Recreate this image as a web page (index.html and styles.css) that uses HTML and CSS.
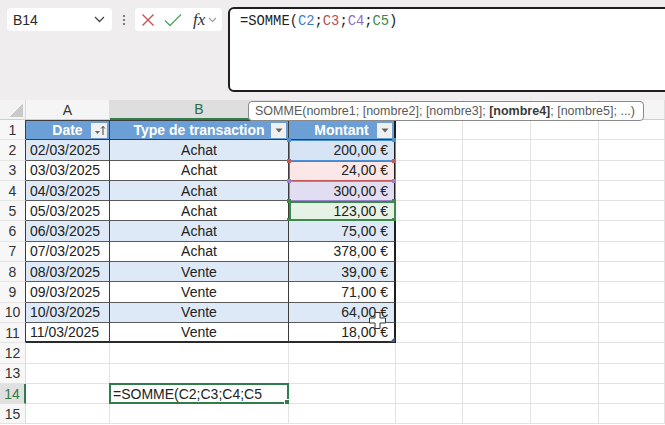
FILE: index.html
```html
<!DOCTYPE html>
<html lang="fr">
  <head>
    <meta charset="UTF-8" />
    <meta name="viewport" content="width=device-width, initial-scale=1.0" />
    <title>Classeur - SOMME</title>
    <link rel="stylesheet" href="styles.css">
  </head>
  <body>
    <div class="topbar">
      <div class="namebox">
        <span>B14</span>
        <svg width="11" height="7" viewBox="0 0 11 7"><path d="M1 1l4.5 4.5L10 1" fill="none" stroke="#444" stroke-width="1.3"/></svg>
      </div>
      <div class="dots"><i></i><i></i><i></i></div>
      <div class="fxbox">
        <svg width="14" height="14" viewBox="0 0 14 14"><path d="M1.5 1.5l11 11M12.5 1.5l-11 11" stroke="#d24c4c" stroke-width="1.4"/></svg>
        <svg width="18" height="14" viewBox="0 0 18 14"><path d="M1 7.5l5 5L17 1.5" fill="none" stroke="#52a564" stroke-width="1.4"/></svg>
        <span class="fx">fx</span>
        <svg width="9" height="6" viewBox="0 0 9 6"><path d="M1 1l3.5 3.5L8 1" fill="none" stroke="#9a9a9a" stroke-width="1.1"/></svg>
      </div>
      <div class="formula">=SOMME(<span class="r1">C2</span>;<span class="r2">C3</span>;<span class="r3">C4</span>;<span class="r4">C5</span>)</div>
    </div>

    <div class="sheet">
      <div class="row colhead">
        <div class="corner"></div>
        <div class="ch">A</div>
        <div class="ch sel">B</div>
        <div class="ch"></div>
        <div class="ch"></div>
        <div class="ch"></div>
        <div class="ch"></div>
        <div class="ch"></div>
      </div>

      <div class="row">
        <div class="rh in">1</div>
        <div class="c t th">Date<span class="filter sort"><svg width="13" height="11" viewBox="0 0 13 11"><path d="M2 6h5l-2.5 3z" fill="#666"/><path d="M10 10V1.5M8 3.5l2-2 2 2" fill="none" stroke="#444" stroke-width="1"/></svg></span></div>
        <div class="c t th">Type de transaction<span class="filter"><svg width="8" height="5" viewBox="0 0 8 5"><path d="M0.5 0.5h7L4 4.5z" fill="#666"/></svg></span></div>
        <div class="c t th last">Montant<span class="filter"><svg width="8" height="5" viewBox="0 0 8 5"><path d="M0.5 0.5h7L4 4.5z" fill="#666"/></svg></span></div>
        <div class="c"></div><div class="c"></div><div class="c"></div><div class="c"></div>
      </div>

      <div class="row band">
        <div class="rh in">2</div>
        <div class="c t date">02/03/2025</div>
        <div class="c t mid">Achat</div>
        <div class="c t num last ref blue">200,00 €</div>
        <div class="c"></div><div class="c"></div><div class="c"></div><div class="c"></div>
      </div>
      <div class="row">
        <div class="rh in">3</div>
        <div class="c t date">03/03/2025</div>
        <div class="c t mid">Achat</div>
        <div class="c t num last ref red">24,00 €</div>
        <div class="c"></div><div class="c"></div><div class="c"></div><div class="c"></div>
      </div>
      <div class="row band">
        <div class="rh in">4</div>
        <div class="c t date">04/03/2025</div>
        <div class="c t mid">Achat</div>
        <div class="c t num last ref purple">300,00 €</div>
        <div class="c"></div><div class="c"></div><div class="c"></div><div class="c"></div>
      </div>
      <div class="row">
        <div class="rh in">5</div>
        <div class="c t date">05/03/2025</div>
        <div class="c t mid">Achat</div>
        <div class="c t num last ref green">123,00 €</div>
        <div class="c"></div><div class="c"></div><div class="c"></div><div class="c"></div>
      </div>
      <div class="row band">
        <div class="rh in">6</div>
        <div class="c t date">06/03/2025</div>
        <div class="c t mid">Achat</div>
        <div class="c t num last">75,00 €</div>
        <div class="c"></div><div class="c"></div><div class="c"></div><div class="c"></div>
      </div>
      <div class="row">
        <div class="rh in">7</div>
        <div class="c t date">07/03/2025</div>
        <div class="c t mid">Achat</div>
        <div class="c t num last">378,00 €</div>
        <div class="c"></div><div class="c"></div><div class="c"></div><div class="c"></div>
      </div>
      <div class="row band">
        <div class="rh in">8</div>
        <div class="c t date">08/03/2025</div>
        <div class="c t mid">Vente</div>
        <div class="c t num last">39,00 €</div>
        <div class="c"></div><div class="c"></div><div class="c"></div><div class="c"></div>
      </div>
      <div class="row">
        <div class="rh in">9</div>
        <div class="c t date">09/03/2025</div>
        <div class="c t mid">Vente</div>
        <div class="c t num last">71,00 €</div>
        <div class="c"></div><div class="c"></div><div class="c"></div><div class="c"></div>
      </div>
      <div class="row band">
        <div class="rh in">10</div>
        <div class="c t date">10/03/2025</div>
        <div class="c t mid">Vente</div>
        <div class="c t num last">64,00 €</div>
        <div class="c"></div><div class="c"></div><div class="c"></div><div class="c"></div>
      </div>
      <div class="row end">
        <div class="rh in">11</div>
        <div class="c t date">11/03/2025</div>
        <div class="c t mid">Vente</div>
        <div class="c t num last corner-mark">18,00 €</div>
        <div class="c"></div><div class="c"></div><div class="c"></div><div class="c"></div>
      </div>
      <div class="row">
        <div class="rh">12</div>
        <div class="c"></div><div class="c"></div><div class="c"></div><div class="c"></div><div class="c"></div><div class="c"></div><div class="c"></div>
      </div>
      <div class="row">
        <div class="rh">13</div>
        <div class="c"></div><div class="c"></div><div class="c"></div><div class="c"></div><div class="c"></div><div class="c"></div><div class="c"></div>
      </div>
      <div class="row">
        <div class="rh active">14</div>
        <div class="c"></div>
        <div class="c editing">=SOMME(C2;C3;C4;C5</div>
        <div class="c"></div><div class="c"></div><div class="c"></div><div class="c"></div><div class="c"></div>
      </div>
      <div class="row">
        <div class="rh">15</div>
        <div class="c"></div><div class="c"></div><div class="c"></div><div class="c"></div><div class="c"></div><div class="c"></div><div class="c"></div>
      </div>
    </div>

    <!-- bulle d'aide de la fonction -->
    <div class="tooltip">SOMME(nombre1; [nombre2]; [nombre3]; <b>[nombre4]</b>; [nombre5]; ...)</div>

    <!-- curseur de la souris -->
    <svg class="cursor" width="20" height="20" viewBox="0 0 20 20">
      <path d="M7 1.5h5v5.5h5.5v5H12v5.5H7V12H1.5V7H7z" fill="#fff" stroke="#333" stroke-width="1"/>
    </svg>
  </body>
</html>
```

FILE: styles.css
```css
body {
  margin: 0;
  width: 665px;
  height: 425px;
  overflow: hidden;
  position: relative;
  font-family: "Liberation Sans", Arial, sans-serif;
  background: #fff;
  color: #222;
}

/* barre de formule */
.topbar {
  height: 100px;
  background: #efeded;
  display: flex;
  align-items: flex-start;
  padding: 7px 0 0 7px;
  box-sizing: border-box;
}
.topbar > * {
  flex-shrink: 0;
}
.namebox {
  width: 105px;
  height: 23px;
  margin-top: 1px;
  background: #fff;
  border-radius: 4px;
  display: flex;
  align-items: center;
  justify-content: space-between;
  padding: 0 7px 0 6px;
  box-sizing: border-box;
  font-size: 14px;
  color: #2a2a2a;
}
.dots {
  width: 23px;
  height: 23px;
  margin-top: 1px;
  display: flex;
  flex-direction: column;
  align-items: center;
  justify-content: center;
  gap: 2px;
}
.dots i {
  width: 2px;
  height: 2px;
  background: #555;
  border-radius: 50%;
}
.fxbox {
  width: 87px;
  height: 23px;
  margin-top: 1px;
  background: #fff;
  border-radius: 4px;
  display: flex;
  align-items: center;
  padding: 0 0 0 6px;
  box-sizing: border-box;
  gap: 9px;
}
.fx {
  font-family: "Liberation Serif", serif;
  font-style: italic;
  font-size: 17px;
  color: #333;
  margin-left: 2px;
  margin-right: -6px;
}
.formula {
  margin-left: 6px;
  width: 450px;
  height: 85px;
  background: #fff;
  border: 2px solid #1e1e1e;
  border-radius: 6px;
  box-sizing: border-box;
  padding: 5px 10px;
  font-family: "Liberation Mono", "DejaVu Sans Mono", monospace;
  font-size: 13.8px;
  color: #222;
}
.r1 { color: #3b80c3; }
.r2 { color: #b6524f; }
.r3 { color: #8c6fbe; }
.r4 { color: #3f8a50; }

/* feuille */
.sheet {
  display: flex;
  flex-direction: column;
}
.row {
  display: grid;
  grid-template-columns: 26px 84px 179px 107px 67px 68px 68px 66px;
  height: 20.3px;
}
.colhead {
  height: 20px;
}
.corner {
  background: #f3f3f3 linear-gradient(to top left, #c9c9c9 50%, transparent 51%) no-repeat right 2px bottom 2px / 13px 13px;
  border-right: 1px solid #d9d9d9;
  border-bottom: 1px solid #cfcfcf;
}
.ch {
  background: #f5f5f5;
  border-right: 1px solid #dedede;
  border-bottom: 1px solid #cfcfcf;
  display: flex;
  align-items: center;
  justify-content: center;
  font-size: 14px;
  color: #333;
}
.ch.sel {
  background: #dedede;
  color: #2d6b41;
  border-bottom: 2px solid #2f7d4a;
}
.rh {
  background: #f7f7f7;
  border-right: 1px solid #dcdcdc;
  border-bottom: 1px solid #e4e4e4;
  display: flex;
  align-items: center;
  justify-content: center;
  font-size: 14px;
  color: #333;
}
.rh.in {
  border-right: 1px solid #3a3a3a;
}
.rh.active {
  background: #e0e0e0;
  color: #2d7a45;
  border-right: 2px solid #2f7d4a;
}

.c {
  border-right: 1px solid #e2e2e2;
  border-bottom: 1px solid #e2e2e2;
  box-sizing: border-box;
  display: flex;
  align-items: center;
  font-size: 14px;
  white-space: nowrap;
  position: relative;
}
.t {
  border-right-color: #3d3d3d;
  border-bottom-color: #5a5a5a;
}
.band .t {
  background: #dde9f6;
}
.last {
  border-right: 2px solid #1f1f1f;
}
.end .t {
  border-bottom: 2px solid #2a2a2a;
}
.th {
  background: #6b9fd5;
  color: #fff;
  font-weight: bold;
  justify-content: center;
  border-top: 1px solid #3d3d3d;
  border-bottom-color: #3d3d3d;
}
.filter {
  position: absolute;
  right: 2px;
  top: 2px;
  width: 15px;
  height: 15px;
  background: #f0f0f0;
  display: flex;
  align-items: center;
  justify-content: center;
}
.filter.sort {
  width: 16px;
}
.date {
  padding-left: 4px;
}
.mid {
  justify-content: center;
}
.num {
  justify-content: flex-end;
  padding-right: 6px;
}

/* plages de références */
.ref.blue {
  background: #d6e4f5;
  outline: 1px solid #4d8fd3;
  outline-offset: -1px;
}
.ref.red {
  background: #fbe6e8;
  outline: 1px solid #c65a5a;
  outline-offset: -1px;
}
.ref.purple {
  background: #e1def1;
  outline: 1px solid #9a7fcb;
  outline-offset: -1px;
}
.ref.green {
  background: #e7f2e6;
  outline: 2px solid #3a8a4b;
  outline-offset: -2px;
}
.ref::before {
  content: "";
  position: absolute;
  left: -2px;
  top: -2px;
  width: 4px;
  height: 4px;
}
.ref.blue::before { background: #4d8fd3; box-shadow: 105px 0 0 #4d8fd3; }
.ref.red::before { background: #c65a5a; box-shadow: 105px 0 0 #c65a5a; }
.ref.purple::before { background: #9a7fcb; box-shadow: 105px 0 0 #9a7fcb; }
.ref.green::before {
  background: #3a8a4b;
  box-shadow: 105px 0 0 #3a8a4b, 0 19px 0 #3a8a4b, 105px 19px 0 #3a8a4b;
}
.corner-mark::after {
  content: "";
  position: absolute;
  right: -1px;
  bottom: -1px;
  border-left: 5px solid transparent;
  border-bottom: 5px solid #3d5a8f;
}

/* cellule en cours de saisie */
.editing {
  border: 2px solid #2f7d4a;
  padding-left: 2px;
  margin: -1px 0 0 -1px;
}
.editing::after {
  content: "";
  position: absolute;
  right: -3px;
  bottom: -3px;
  width: 4px;
  height: 4px;
  background: #2f7d4a;
  border: 1px solid #fff;
}

.tooltip {
  position: absolute;
  left: 248px;
  top: 101px;
  width: 396px;
  height: 20px;
  box-sizing: border-box;
  background: #fff;
  border: 1px solid #8a8a8a;
  border-radius: 4px;
  padding: 0 6px;
  font-size: 12.5px;
  line-height: 18px;
  color: #5a5a5a;
  white-space: nowrap;
}
.tooltip b {
  color: #3a3a3a;
}
.cursor {
  position: absolute;
  left: 368px;
  top: 311px;
}
```
